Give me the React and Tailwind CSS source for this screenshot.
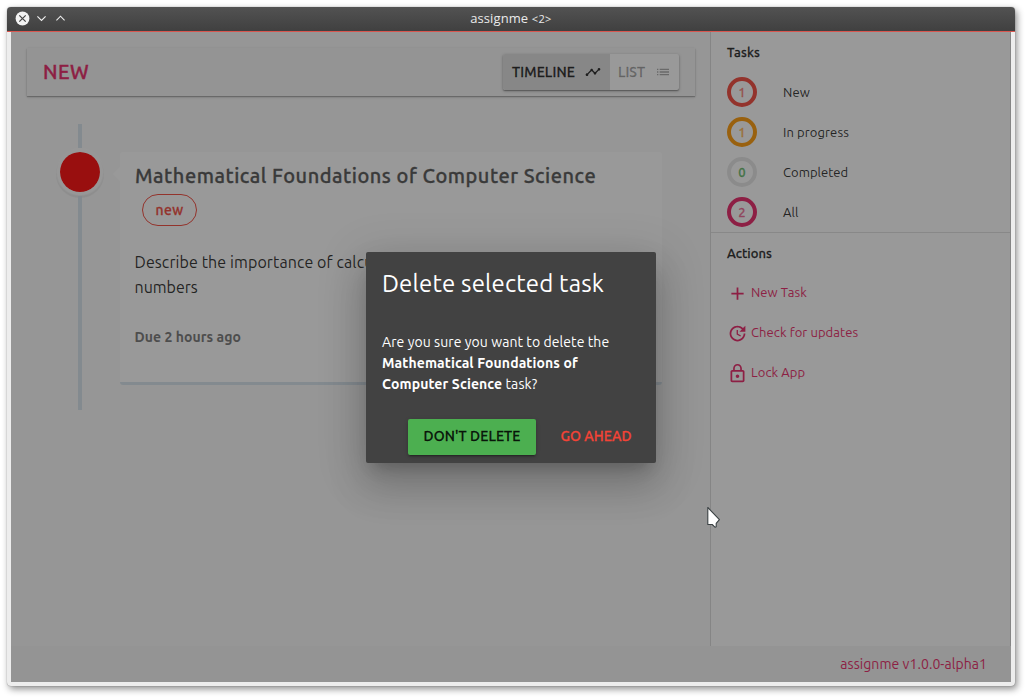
import { MdAdd, MdList, MdLockOutline, MdTimeline, MdUpdate } from 'react-icons/md';

const tasks = [
  { label: 'New', count: 1, ring: 'border-[#f44336]', text: 'text-[#f44336]/65', track: 'tracking-[0.15px]' },
  { label: 'In progress', count: 1, ring: 'border-[#ff9800]', text: 'text-[#ff9800]/65', track: 'tracking-[0.11px]' },
  { label: 'Completed', count: 0, ring: 'border-black/10', text: 'text-[#4caf50]/85', track: 'tracking-[0.04px]' },
  { label: 'All', count: 2, ring: 'border-[#e91e63]', text: 'text-[#e91e63]/65', track: 'tracking-[0.1px]' },
];

const actions = [
  { label: 'New Task', Icon: MdAdd },
  { label: 'Check for updates', Icon: MdUpdate },
  { label: 'Lock App', Icon: MdLockOutline },
];

function TitleBar() {
  return (
    <header className="grid h-[25px] shrink-0 grid-cols-[1fr_auto_1fr] items-center rounded-t-[4px] border-b border-[#d8564f] bg-linear-to-b from-[#525252] to-[#404040] pb-[2px]">
      <div className="flex items-center pl-[8px]">
        <svg width="15" height="15" viewBox="0 0 15 15" fill="none">
          <circle cx="7.5" cy="7.5" r="6.9" fill="#f2f2f2" />
          <path d="M4.3 4.3l6.4 6.4M10.7 4.3l-6.4 6.4" stroke="#444" strokeWidth="1.2" />
        </svg>
        <svg className="ml-[7px]" width="9" height="7" viewBox="0 0 9 7" fill="none">
          <path d="M.4 1.4L4.5 5.5 8.6 1.4" stroke="#efefef" strokeWidth="1.15" />
        </svg>
        <svg className="ml-[10px]" width="9" height="7" viewBox="0 0 9 7" fill="none">
          <path d="M.4 5.3L4.5 1.2 8.6 5.3" stroke="#efefef" strokeWidth="1.15" />
        </svg>
      </div>
      <div className="whitespace-nowrap font-['Open_Sans','Noto_Sans',sans-serif] text-[13px] leading-[20px] tracking-[0.1px] text-[#eaeaea]">
        assignme <span className="text-[11px] tracking-[0.4px]">&lt;2&gt;</span>
      </div>
      <div />
    </header>
  );
}

function Toolbar() {
  return (
    <div className="flex h-[48px] items-center justify-between bg-[#f5f5f5] px-4 shadow-[0_1px_3px_rgba(0,0,0,0.2),0_1px_1px_rgba(0,0,0,0.24)]">
      <h1 className="text-[20px] font-medium tracking-[0.5px] text-[#e91e63] [-webkit-text-stroke:0.35px]">NEW</h1>
      <div className="flex h-[36px] overflow-hidden rounded-[2px] bg-white text-[14px] font-medium shadow-[0_1px_3px_rgba(0,0,0,0.35),0_1px_1px_rgba(0,0,0,0.25)]">
        <button className="flex w-[107px] items-center justify-between bg-[#dedede] pr-[9px] pl-[9px] tracking-[0.15px] text-black/87">
          <span className="[-webkit-text-stroke:0.28px]">TIMELINE</span> <MdTimeline size={16} />
        </button>
        <button className="flex w-[69px] items-center justify-between pr-[8px] pl-[8px] tracking-[0.05px] text-black/35">
          <span className="[-webkit-text-stroke:0.28px]">LIST</span> <MdList size={16} />
        </button>
      </div>
    </div>
  );
}

function Timeline() {
  return (
    <section className="mt-[28px] flex h-[286px] pl-[29px]">
      <div className="flex w-[48px] flex-col items-center">
        <div className="h-[24px] w-[4px] bg-[#d7e4ed]" />
        <div className="size-[48px] rounded-full border-4 border-white/45 bg-[#ff0000] bg-clip-padding shadow-[0_2px_1px_rgba(0,0,0,0.07)]" />
        <div className="w-[4px] flex-1 bg-[#d7e4ed]" />
      </div>
      <div className="mt-[43px] h-0 w-[16px] pl-[9px]">
        <div className="border-y-[7px] border-r-[7px] border-y-transparent border-r-white" />
      </div>
      <article className="mt-[28px] h-[233px] w-[542px] rounded-[3px] border-b-[3px] border-[#d7e4ed] bg-white px-[15px] pt-[11px]">
        <h2 className="text-[20px] leading-[26px] font-medium tracking-[0.51px] whitespace-nowrap text-[#505050] [-webkit-text-stroke:0.3px]">
          Mathematical Foundations of Computer Science
        </h2>
        <div className="mt-[5px] ml-[7px] flex h-[32px] w-[55px] items-center justify-center rounded-full border border-[#f44336] text-[14px] font-medium tracking-[0.45px] text-[#f44336] [-webkit-text-stroke:0.28px]">
          new
        </div>
        <p className="mt-[24px] ml-[-0.5px] w-[490px] text-[16px] leading-[25px] tracking-[0.1px] text-black/87">
          Describe the importance of calculus and real
          <br />
          <span className="tracking-[0]">numbers</span>
        </p>
        <p className="mt-[27px] ml-[-0.5px] text-[14px] leading-[20px] font-bold tracking-[0.05px] text-[#747474]">Due 2 hours ago</p>
      </article>
    </section>
  );
}

function Sidebar() {
  return (
    <aside className="flex w-[301px] flex-col border-x border-black/14 bg-white text-[13px] text-black/87">
      <section className="border-b border-black/12 pl-[16px]">
        <h3 className="flex h-[40px] items-center pt-[2px] font-medium tracking-[0.15px] [-webkit-text-stroke:0.28px]">Tasks</h3>
        <ul>
          {tasks.map((t) => (
            <li key={t.label} className="flex h-[40px] items-center">
              <div className={`flex size-[30px] items-center justify-center rounded-full border-4 ${t.ring} ${t.text}`}>
                <span className="pt-px font-medium [-webkit-text-stroke:0.28px]">{t.count}</span>
              </div>
              <span className={`ml-[26px] pt-[2px] ${t.track}`}>{t.label}</span>
            </li>
          ))}
        </ul>
      </section>
      <section className="pl-[16px]">
        <h3 className="flex h-[40px] items-center pt-[2px] font-medium tracking-[0.05px] [-webkit-text-stroke:0.28px]">Actions</h3>
        <ul>
          {actions.map(({ label, Icon }) => (
            <li key={label} className="flex h-[40px] items-center tracking-[0.08px] text-[#e91e63]">
              <Icon size={21} />
              <span className="ml-[3px]">{label}</span>
            </li>
          ))}
        </ul>
      </section>
    </aside>
  );
}

function Dialog() {
  return (
    <div className="h-[211px] w-[290px] rounded-[2px] bg-[#424242] px-4 text-white shadow-[0_11px_15px_-7px_rgba(0,0,0,0.2),0_24px_38px_3px_rgba(0,0,0,0.14),0_9px_46px_8px_rgba(0,0,0,0.12)]">
      <h2 className="pt-[16px] text-[24px] leading-[32px] tracking-[0.17px]">Delete selected task</h2>
      <p className="mt-[32px] text-[14px] leading-[21px] tracking-[0.08px] whitespace-nowrap">
        Are you sure you want to delete the
        <br />
        <b className="tracking-[0.11px]">
          Mathematical Foundations of
          <br />
          Computer Science
        </b>{' '}
        task?
      </p>
      <div className="mt-[24px] flex h-[36px] justify-end gap-[8px] text-[14px] font-medium [-webkit-text-stroke:0.28px]">
        <button className="w-[128px] rounded-[2px] bg-[#4caf50] tracking-[0.12px] text-black/87 shadow-[0_3px_1px_-2px_rgba(0,0,0,0.2),0_2px_2px_rgba(0,0,0,0.14),0_1px_5px_rgba(0,0,0,0.12)]">
          DON'T DELETE
        </button>
        <button className="mr-[-8px] w-[104px] tracking-[0.04px] text-[#f44336]">GO AHEAD</button>
      </div>
    </div>
  );
}

export default function App() {
  return (
    <div className="h-[699px] w-[1028px] overflow-hidden bg-white pt-[7px] pl-[7px] font-['Ubuntu','Noto_Sans',sans-serif]">
      <div className="relative flex h-[679px] w-[1008px] flex-col rounded-[4px] bg-[#ededed] shadow-[0_0_1px_rgba(0,0,0,0.5),2px_3px_7px_rgba(0,0,0,0.45)]">
        <TitleBar />
        <div className="relative mr-[4px] mb-[4px] ml-[4px] flex min-h-0 flex-1 flex-col">
          <div className="flex min-h-0 flex-1">
            <main className="flex-1 bg-[#fafafa] px-4 pt-4 pr-[15px]">
              <Toolbar />
              <Timeline />
            </main>
            <Sidebar />
          </div>
          <footer className="flex h-[36px] items-center justify-end bg-[#f5f5f5] pr-[24px] text-[14px] tracking-[0.06px] text-[#e91e63]">
            assignme v1.0.0-alpha1
          </footer>
          <div className="absolute inset-0 flex items-center justify-center bg-[#212121]/46">
            <Dialog />
          </div>
        </div>
        <svg className="absolute top-[499px] left-[699px]" width="15" height="24" viewBox="0 0 15 24">
          <path d="M1.8 1.5v17h4.4l3 2.8 1-.6v-3.4l3.2-3.6z" fill="#fff" stroke="#3b4244" strokeWidth="1.1" strokeLinejoin="round" />
        </svg>
      </div>
    </div>
  );
}
